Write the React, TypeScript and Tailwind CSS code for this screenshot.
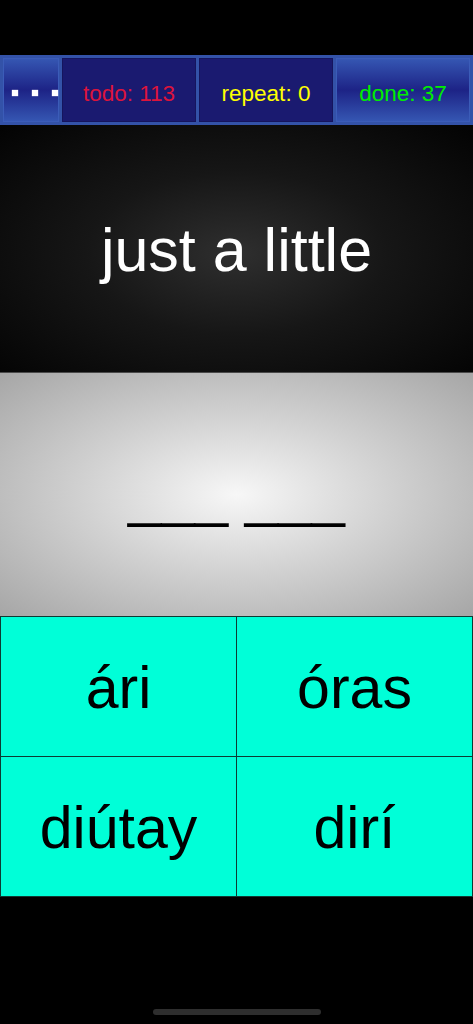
import React from 'react'

const sans = { fontFamily: '"Liberation Sans", Arial, sans-serif' }

interface Counter {
  label: string
  value: number
  color: string
  raised?: boolean
}

const counters: Counter[] = [
  { label: 'todo', value: 113, color: 'text-[#dc143c]' },
  { label: 'repeat', value: 0, color: 'text-[#ffff00]' },
  { label: 'done', value: 37, color: 'text-[#00ee00]', raised: true },
]

const choices = ['ári', 'óras', 'diútay', 'dirí']

const MenuButton = () => (
  <button className="w-[56px] h-full flex items-center justify-center gap-[14px] pl-[8px] pt-[6px] border border-[#3b5cb8] bg-[linear-gradient(to_bottom,#3556b2_0%,#1d2386_50%,#3556b2_100%)]">
    <span className="w-[6px] h-[6px] bg-white shadow-[0_0_1px_#fff]" />
    <span className="w-[6px] h-[6px] bg-white shadow-[0_0_1px_#fff]" />
    <span className="w-[6px] h-[6px] bg-white shadow-[0_0_1px_#fff]" />
  </button>
)

const CounterCell: React.FC<{ c: Counter }> = ({ c }) => (
  <div
    className={`h-full flex items-center justify-center pt-[8px] text-[22.5px] ${c.color} ${
      c.raised
        ? 'flex-1 border border-[#3b5cb8] bg-[linear-gradient(to_bottom,#3556b2_0%,#1d2386_50%,#3556b2_100%)]'
        : 'w-[134px] border border-[#15155e] bg-[#1a1a70]'
    }`}
  >
    {c.label}: {c.value}
  </div>
)

export default function App() {
  return (
    <div className="w-[473px] h-[1024px] bg-black flex flex-col overflow-hidden" style={sans}>
      <div className="h-[55px]" />

      {/* stats bar */}
      <div className="h-[70px] bg-[#3352a8] flex items-stretch gap-[3px] px-[3px] py-[3px]">
        <MenuButton />
        {counters.map((c) => (
          <CounterCell key={c.label} c={c} />
        ))}
      </div>

      {/* prompt */}
      <div className="h-[247px] flex items-center justify-center bg-[radial-gradient(ellipse_at_50%_52%,#2f2f2f_0%,#161616_45%,#030303_100%)]">
        <div className="text-white text-[61px] leading-none pt-[4px]">just a little</div>
      </div>

      {/* answer slots */}
      <div className="h-[244px] flex items-center justify-center border-t border-[#4a4a4a] bg-[radial-gradient(ellipse_at_50%_50%,#f7f7f7_0%,#d2d2d2_45%,#a6a6a6_100%)]">
        <div className="text-black text-[60px] leading-none whitespace-pre">___ ___</div>
      </div>

      {/* choices */}
      <div className="grid grid-cols-2 border-l border-t border-[#0d3b33] w-[473px]">
        {choices.map((w) => (
          <button
            key={w}
            className="h-[140px] flex items-center justify-center pt-[3px] bg-[#00ffd8] border-r border-b border-[#0d3b33] text-black text-[59px] leading-none"
          >
            {w}
          </button>
        ))}
      </div>

      <div className="flex-1 flex items-end justify-center pb-[9px]">
        <div className="w-[168px] h-[6px] rounded-full bg-[#2e2e2e]" />
      </div>
    </div>
  )
}
